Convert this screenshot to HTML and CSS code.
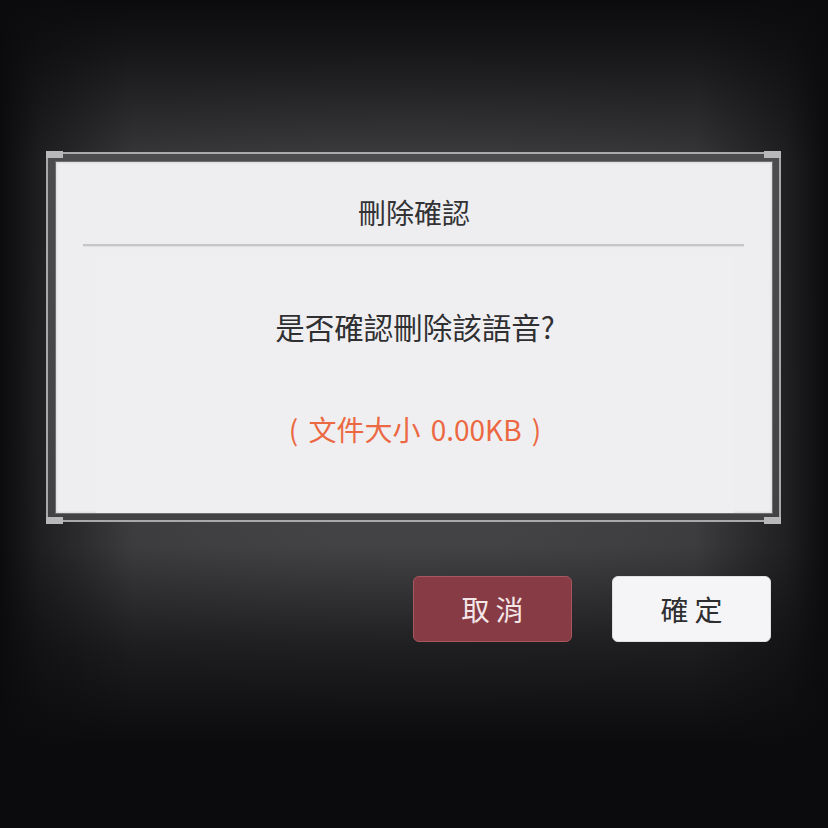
FILE: index.html
```html
<!DOCTYPE html>
<html lang="zh-Hant">
<head>
<meta charset="utf-8">
<title>刪除確認</title>
<link rel="stylesheet" href="styles.css">
</head>
<body>
<div class="stage">
  <div class="dialog">
    <span class="corner tl"></span>
    <span class="corner tr"></span>
    <span class="corner bl"></span>
    <span class="corner br"></span>
    <div class="panel">
      <div class="title">刪除確認</div>
      <div class="divider"></div>
      <div class="body">
        <div class="message">是否確認刪除該語音?</div>
        <div class="size">( 文件大小 0.00KB )</div>
      </div>
    </div>
  </div>
  <div class="actions">
    <button class="btn cancel">取消</button>
    <button class="btn ok">確定</button>
  </div>
</div>
</body>
</html>
```

FILE: styles.css
```css
html, body {
  margin: 0;
  padding: 0;
  height: 100%;
}
body {
  width: 828px;
  height: 828px;
  overflow: hidden;
  font-family: "Noto Sans CJK TC", "Noto Sans", sans-serif;
  background:
    linear-gradient(to bottom, #0b0b0d 0%, rgba(11,11,13,0.75) 6%, rgba(11,11,13,0) 20%, rgba(11,11,13,0) 66%, rgba(11,11,13,0.6) 78%, #0b0b0d 90%),
    linear-gradient(to right, #0b0b0d 0%, rgba(11,11,13,0.55) 5%, rgba(11,11,13,0) 16%, rgba(11,11,13,0) 84%, rgba(11,11,13,0.55) 95%, #0b0b0d 100%),
    radial-gradient(ellipse 420px 360px at 50% 48%, #49494b 0%, #404042 60%, #38383a 100%);
  background-color: #0b0b0d;
}
.stage {
  display: flex;
  flex-direction: column;
  padding: 152px 0 0 46px;
  width: 735px;
}
.dialog {
  position: relative;
  width: 731px;
  height: 366px;
  border: 2px solid #a9a9ab;
  box-sizing: content-box;
  background: linear-gradient(#4c4c4e, #424244);
  display: flex;
}
.panel {
  margin: 8px 7px 7px 8px;
  flex: 1;
  background: #eeeef0;
  box-shadow: 0 0 0 1px #6e6e70, inset 0 0 3px rgba(0,0,0,0.15);
  display: flex;
  flex-direction: column;
  align-items: center;
  padding-top: 30px;
}
.corner {
  position: absolute;
  width: 17px;
  height: 7px;
  background: #b8b8ba;
}
.corner.tl { left: -2px; top: -3px; }
.corner.tr { right: -2px; top: -3px; }
.corner.bl { left: -2px; bottom: -4px; }
.corner.br { right: -2px; bottom: -4px; }
.title {
  font-size: 28px;
  line-height: 40px;
  color: #333335;
}
.divider {
  margin-top: 12px;
  align-self: stretch;
  margin-left: 27px;
  margin-right: 28px;
  height: 2px;
  background: #c6c6c8;
  box-shadow: 0 1px 1px rgba(0,0,0,0.06);
}
.body {
  display: flex;
  flex-direction: column;
  align-items: center;
  align-self: stretch;
  margin: 10px 38px 0 40px;
  padding-top: 50px;
  background: #efeff1;
  flex: 1;
}
.message {
  font-size: 29.5px;
  line-height: 40px;
  color: #303032;
}
.size {
  margin-top: 63px;
  font-size: 28px;
  line-height: 40px;
  word-spacing: 4px;
  color: #ec6843;
}
.actions {
  display: flex;
  justify-content: flex-end;
  gap: 40px;
  margin-top: 54px;
  padding-right: 10px;
}
.btn {
  width: 159px;
  height: 66px;
  border-radius: 6px;
  font-family: "Noto Sans CJK TC", "Noto Sans", sans-serif;
  font-size: 28px;
  letter-spacing: 6px;
  text-indent: 6px;
  padding: 0;
  cursor: pointer;
}
.cancel {
  background: #873b45;
  border: 1.5px solid #a8575f;
  color: #f3e6e7;
}
.ok {
  background: #f5f5f7;
  border: 1px solid #e0e0e2;
  color: #2e2e30;
}
```
